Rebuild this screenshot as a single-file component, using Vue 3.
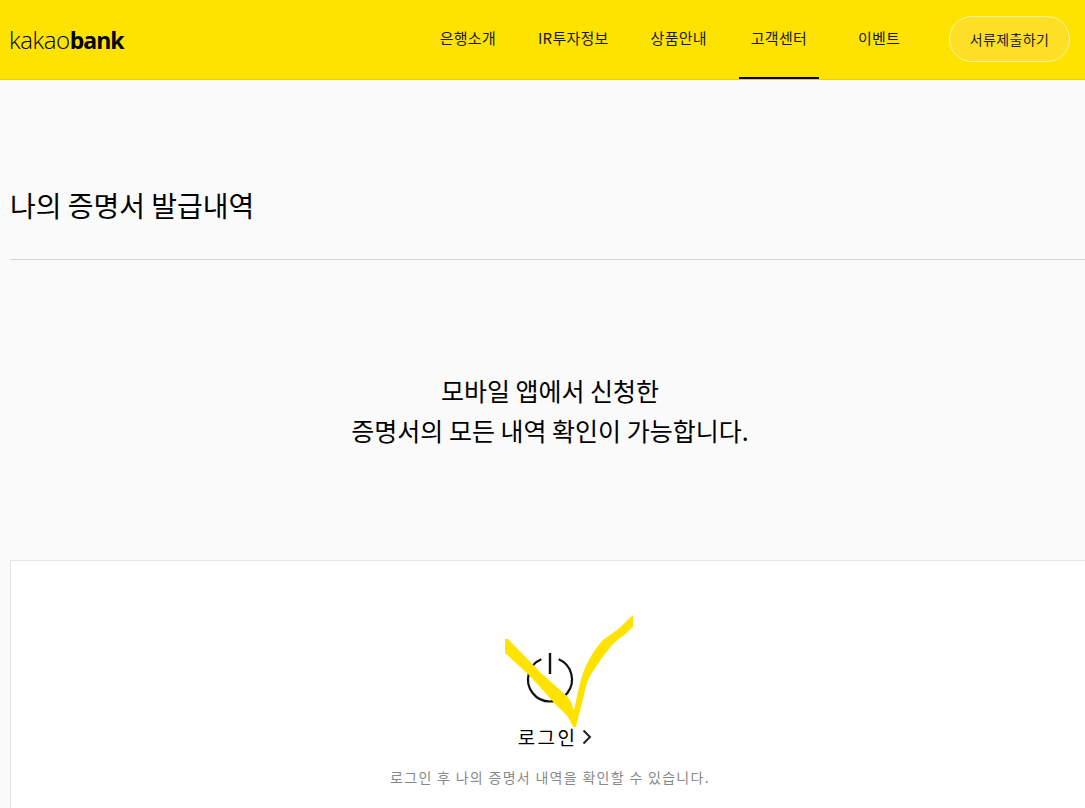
<template>
  <div class="page">
    <header class="site-header">
      <a class="logo">kakao<b>bank</b></a>
      <nav class="gnb">
        <a v-for="item in menu" :key="item" class="gnb-item" :class="{ active: item === '고객센터' }">{{ item }}</a>
      </nav>
      <a class="submit-btn">서류제출하기</a>
    </header>

    <main class="content">
      <h1 class="title">나의 증명서 발급내역</h1>
      <p class="intro">모바일 앱에서 신청한<br />증명서의 모든 내역 확인이 가능합니다.</p>

      <section class="login-card">
        <svg class="power-icon" viewBox="0 0 46 50" fill="none" stroke="#111" aria-hidden="true">
          <path d="M14.3 6.3a22 22 0 1 0 17.4 0" stroke-width="2.2" />
          <path d="M23 0v21" stroke-width="2.4" />
        </svg>
        <a class="login-link">로그인
          <svg class="chevron" viewBox="0 0 10 16" fill="none" stroke="#222" stroke-width="2" aria-hidden="true">
            <path d="M1.5 1.5 8 8l-6.5 6.5" />
          </svg>
        </a>
        <p class="login-desc">로그인 후 나의 증명서 내역을 확인할 수 있습니다.</p>

        <!-- hand-drawn highlighter check on top of the screenshot -->
        <svg class="check-mark" viewBox="0 0 130 113" aria-hidden="true">
          <path d="M0 24H3L35 57 63 82Q67 88 68 93L69 95 73 77Q75 67 78 58 83 45 90 35 94 29 98 25L112 15Q120 8 128 0V12L118 21Q109 27 103 35 98 41 93 49 87 57 83 65 80 74 78 84L71 112H68Q66 107 63 102 58 96 52 91L25 61 0 38Z" fill="#ffe300" />
        </svg>
      </section>
    </main>
  </div>
</template>

<script setup>
const menu = ['은행소개', 'IR투자정보', '상품안내', '고객센터', '이벤트']
</script>

<style>
html, body {
  overflow: hidden;
}
</style>

<style scoped>
.page {
  width: 1085px;
  height: 808px;
  overflow: hidden;
  background: #fafafa;
  color: #000;
  font-family: "Noto Sans CJK KR", "Noto Sans", sans-serif;
}

.site-header {
  display: flex;
  align-items: center;
  height: 79px;
  padding: 0 15px 0 10px;
  background: #ffe300;
  border-bottom: 1px solid #e6cf10;
}

.logo {
  font-family: "Open Sans", sans-serif;
  font-size: 24px;
  font-weight: 300;
  letter-spacing: -0.4px;
  margin-right: auto;
  margin-left: -1px;
}

.logo b {
  font-size: 23px;
  font-weight: 700;
  letter-spacing: -1px;
}

.gnb {
  display: flex;
  align-self: stretch;
  gap: 20px;
  margin-right: 30px;
}

.gnb-item {
  display: flex;
  align-items: center;
  justify-content: center;
  min-width: 80px;
  padding: 0 12px 5px;
  box-sizing: border-box;
  font-size: 15px;
  letter-spacing: 0.25px;
  color: #1a1a1a;
}

.gnb-item.active {
  box-shadow: inset 0 -2px 0 #000;
}

.gnb-item:nth-child(-n + 2) {
  margin-right: -2px;
}

.submit-btn {
  display: flex;
  align-items: center;
  justify-content: center;
  width: 121px;
  height: 46px;
  margin-bottom: 2px;
  box-sizing: border-box;
  border: 1px solid #fff3a0;
  border-radius: 23px;
  background: #ffde26;
  font-size: 14px;
  letter-spacing: 0.4px;
  color: #222;
}

.content {
  width: 1080px;
  margin-left: 10px;
}

.title {
  margin: 0;
  padding: 105px 0 34px;
  border-bottom: 1px solid #d4d4d4;
  font-size: 28px;
  font-weight: 400;
  line-height: 40px;
}

.intro {
  margin: 0;
  padding: 110px 0 110px;
  font-size: 25px;
  line-height: 40px;
  text-align: center;
}

.login-card {
  position: relative;
  display: flex;
  flex-direction: column;
  align-items: center;
  height: 300px;
  padding-top: 92px;
  box-sizing: border-box;
  background: #fff;
  border: 1px solid #e5e5e5;
}

.power-icon {
  width: 46px;
  height: 50px;
  overflow: visible;
}

.login-link {
  display: flex;
  align-items: center;
  gap: 5px;
  margin: 20px 0 0 10px;
  font-size: 19px;
  line-height: 28px;
  letter-spacing: 2.4px;
}

.chevron {
  width: 10px;
  height: 16px;
}

.login-desc {
  margin: 14px 0 0;
  font-size: 14px;
  line-height: 24px;
  letter-spacing: 1.3px;
  color: #888;
}

.check-mark {
  position: absolute;
  left: 494px;
  top: 54px;
  width: 130px;
  height: 113px;
}
</style>
